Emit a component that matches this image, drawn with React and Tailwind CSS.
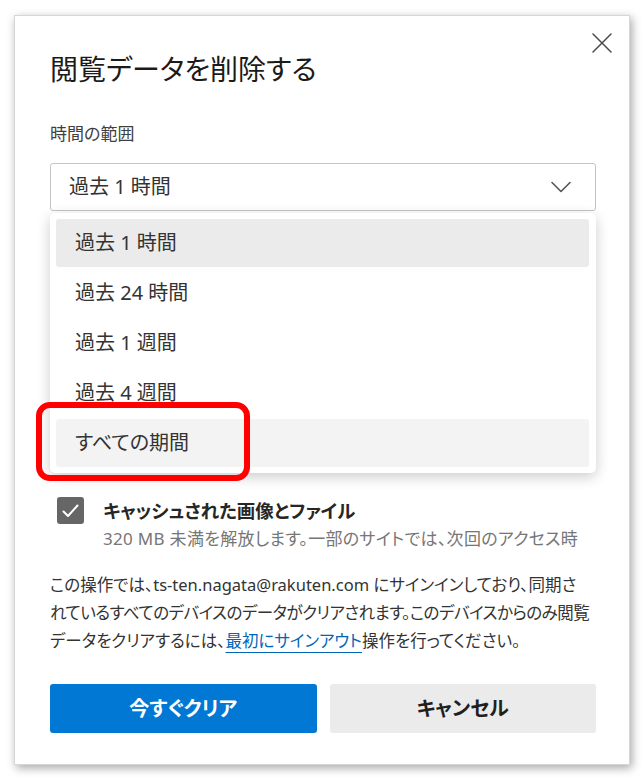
import React from 'react';

const ranges = ['過去 1 時間', '過去 24 時間', '過去 1 週間', '過去 4 週間', 'すべての期間'];

function Chevron() {
  return (
    <svg width="20" height="12" viewBox="0 0 20 12" fill="none">
      <path d="M1 1.5 L10 10.5 L19 1.5" stroke="#555" strokeWidth="1.6" strokeLinecap="round" strokeLinejoin="round" />
    </svg>
  );
}

export default function App() {
  return (
    <div className="min-h-screen bg-white pt-[15px] pl-[14px] font-['Noto_Sans','Noto_Sans_CJK_JP',sans-serif] [font-feature-settings:'palt']">
      <div className="relative w-[616px] h-[750px] bg-white border border-[#d6d6d6] shadow-[2px_3px_9px_rgba(0,0,0,0.35)] pt-[35px] pl-[35px] pr-[33px]">
        {/* close */}
        <button className="absolute top-[17px] right-[17px] w-[20px] h-[20px]">
          <svg width="20" height="20" viewBox="0 0 20 20" fill="none">
            <path d="M1 1 L19 19 M19 1 L1 19" stroke="#4a4a4a" strokeWidth="1.5" strokeLinecap="round" />
          </svg>
        </button>

        <h1 className="text-[28px] leading-[36px] font-normal text-[#1b1b1b]">閲覧データを削除する</h1>

        <p className="mt-[35px] text-[17px] leading-[24px] text-[#404040]">時間の範囲</p>

        <div className="relative mt-[17px]">
          <div className="h-[48px] border border-[#c4c4c4] rounded-[3px] flex items-center justify-between pl-[18px] pr-[24px] text-[20px] text-[#333]">
            <span>過去 1 時間</span>
            <Chevron />
          </div>

          {/* dropdown list */}
          <div className="absolute left-0 right-0 top-[50px] z-10 bg-white rounded-[5px] shadow-[0_4px_14px_rgba(0,0,0,0.2)] p-[6px] pr-[7px] flex flex-col gap-[2px]">
            {ranges.map((r, i) => (
              <div
                key={r}
                className={`h-[48px] flex items-center pl-[19px] rounded-[3px] text-[20px] text-[#333] ${i === 0 ? 'bg-[#ebebeb]' : i === 4 ? 'bg-[#f3f3f3]' : ''}`}
              >
                {r}
              </div>
            ))}
          </div>
        </div>

        <div className="mt-[286px] flex pl-[7px]">
          <div className="w-[27px] h-[27px] bg-[#666] rounded-[3px] flex items-center justify-center shrink-0">
            <svg width="17" height="14" viewBox="0 0 17 14" fill="none">
              <path d="M1.5 7.5 L6 12 L15.5 1.5" stroke="#fff" strokeWidth="2" strokeLinecap="round" strokeLinejoin="round" />
            </svg>
          </div>
          <div className="ml-[19px]">
            <p className="text-[18.5px] leading-[28px] font-bold text-[#262626]">キャッシュされた画像とファイル</p>
            <p className="text-[17px] tracking-[0.3px] leading-[28px] text-[#767676] whitespace-nowrap">320 MB 未満を解放します。一部のサイトでは、次回のアクセス時</p>
          </div>
        </div>

        <p className="mt-[18px] text-[16.5px] leading-[28px] text-[#333] whitespace-nowrap">
          この操作では、ts-ten.nagata@rakuten.com にサインインしており、同期さ
          <br />
          <span className="tracking-[-0.5px]">れているすべてのデバイスのデータがクリアされます。このデバイスからのみ閲覧</span>
          <br />
          データをクリアするには、
          <a className="text-[#0067b8] underline underline-offset-[5px] decoration-[#0067b8]">最初にサインアウト</a>
          操作を行ってください。
        </p>

        <div className="mt-[29px] grid grid-cols-2 gap-[13px]">
          <button className="h-[49px] rounded-[3px] bg-[#0078d4] text-white text-[20px] font-bold">今すぐクリア</button>
          <button className="h-[49px] rounded-[3px] bg-[#ebebeb] text-[#1f1f1f] text-[20px] font-bold">キャンセル</button>
        </div>

        {/* red highlight annotation */}
        <div className="absolute left-[21px] top-[386px] w-[214px] h-[79px] border-[6px] border-[#ff0000] rounded-[14px] z-20" />
      </div>
    </div>
  );
}
